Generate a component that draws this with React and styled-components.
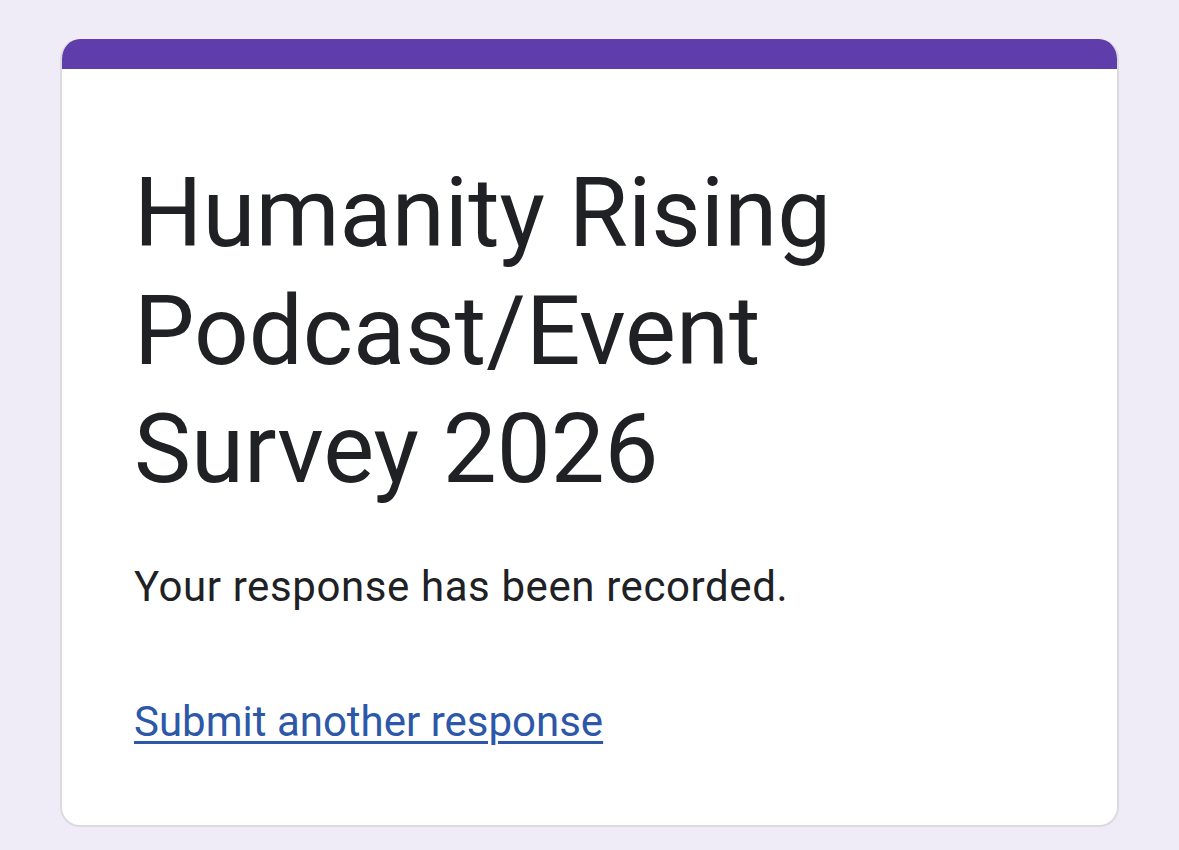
import styled, { createGlobalStyle } from 'styled-components';

const GlobalStyle = createGlobalStyle`
    html, body {
        margin: 0;
        padding: 0;
        background-color: #efebf7;
        font-family: Roboto, "Noto Sans", Arial, sans-serif;
    }
`

function App(){
    return(
        <Page>
            <GlobalStyle />
            <Card>
                <TopBand />
                <Content>
                    <Title>Humanity Rising Podcast/Event Survey 2026</Title>
                    <Message>Your response has been recorded.</Message>
                    <AnotherLink href="#">Submit another response</AnotherLink>
                </Content>
            </Card>
        </Page>
    )
}

export default App;

const Page = styled.div`
    width: 100%;
    min-height: 850px;
    padding-top: 39px;
    box-sizing: border-box;
    background-color: #efebf7;
`

const Card = styled.div`
    margin-left: 60px;
    width: 1059px;
    box-sizing: border-box;
    background-color: #ffffff;
    border: 2px solid #dcdadf;
    border-top: none;
    border-radius: 20px;
    overflow: hidden;
`

const TopBand = styled.div`
    height: 30px;
    background-color: #5f3dab;
`

const Content = styled.div`
    display: flex;
    flex-direction: column;
    align-items: flex-start;
    padding: 85px 72px 72px 72px;
`

const Title = styled.h1`
    margin: 0;
    width: 760px;
    font-size: 96px;
    font-weight: 400;
    line-height: 118px;
    color: #202124;
`

const Message = styled.p`
    margin: 47px 0 0 0;
    font-size: 42px;
    line-height: 63px;
    letter-spacing: 0.6px;
    color: #202124;
`

const AnotherLink = styled.a`
    margin-top: 72px;
    font-size: 42px;
    line-height: 63px;
    color: #2d57a8;
    text-decoration: underline;
    text-underline-offset: 5px;
    text-decoration-thickness: 3px;
`
